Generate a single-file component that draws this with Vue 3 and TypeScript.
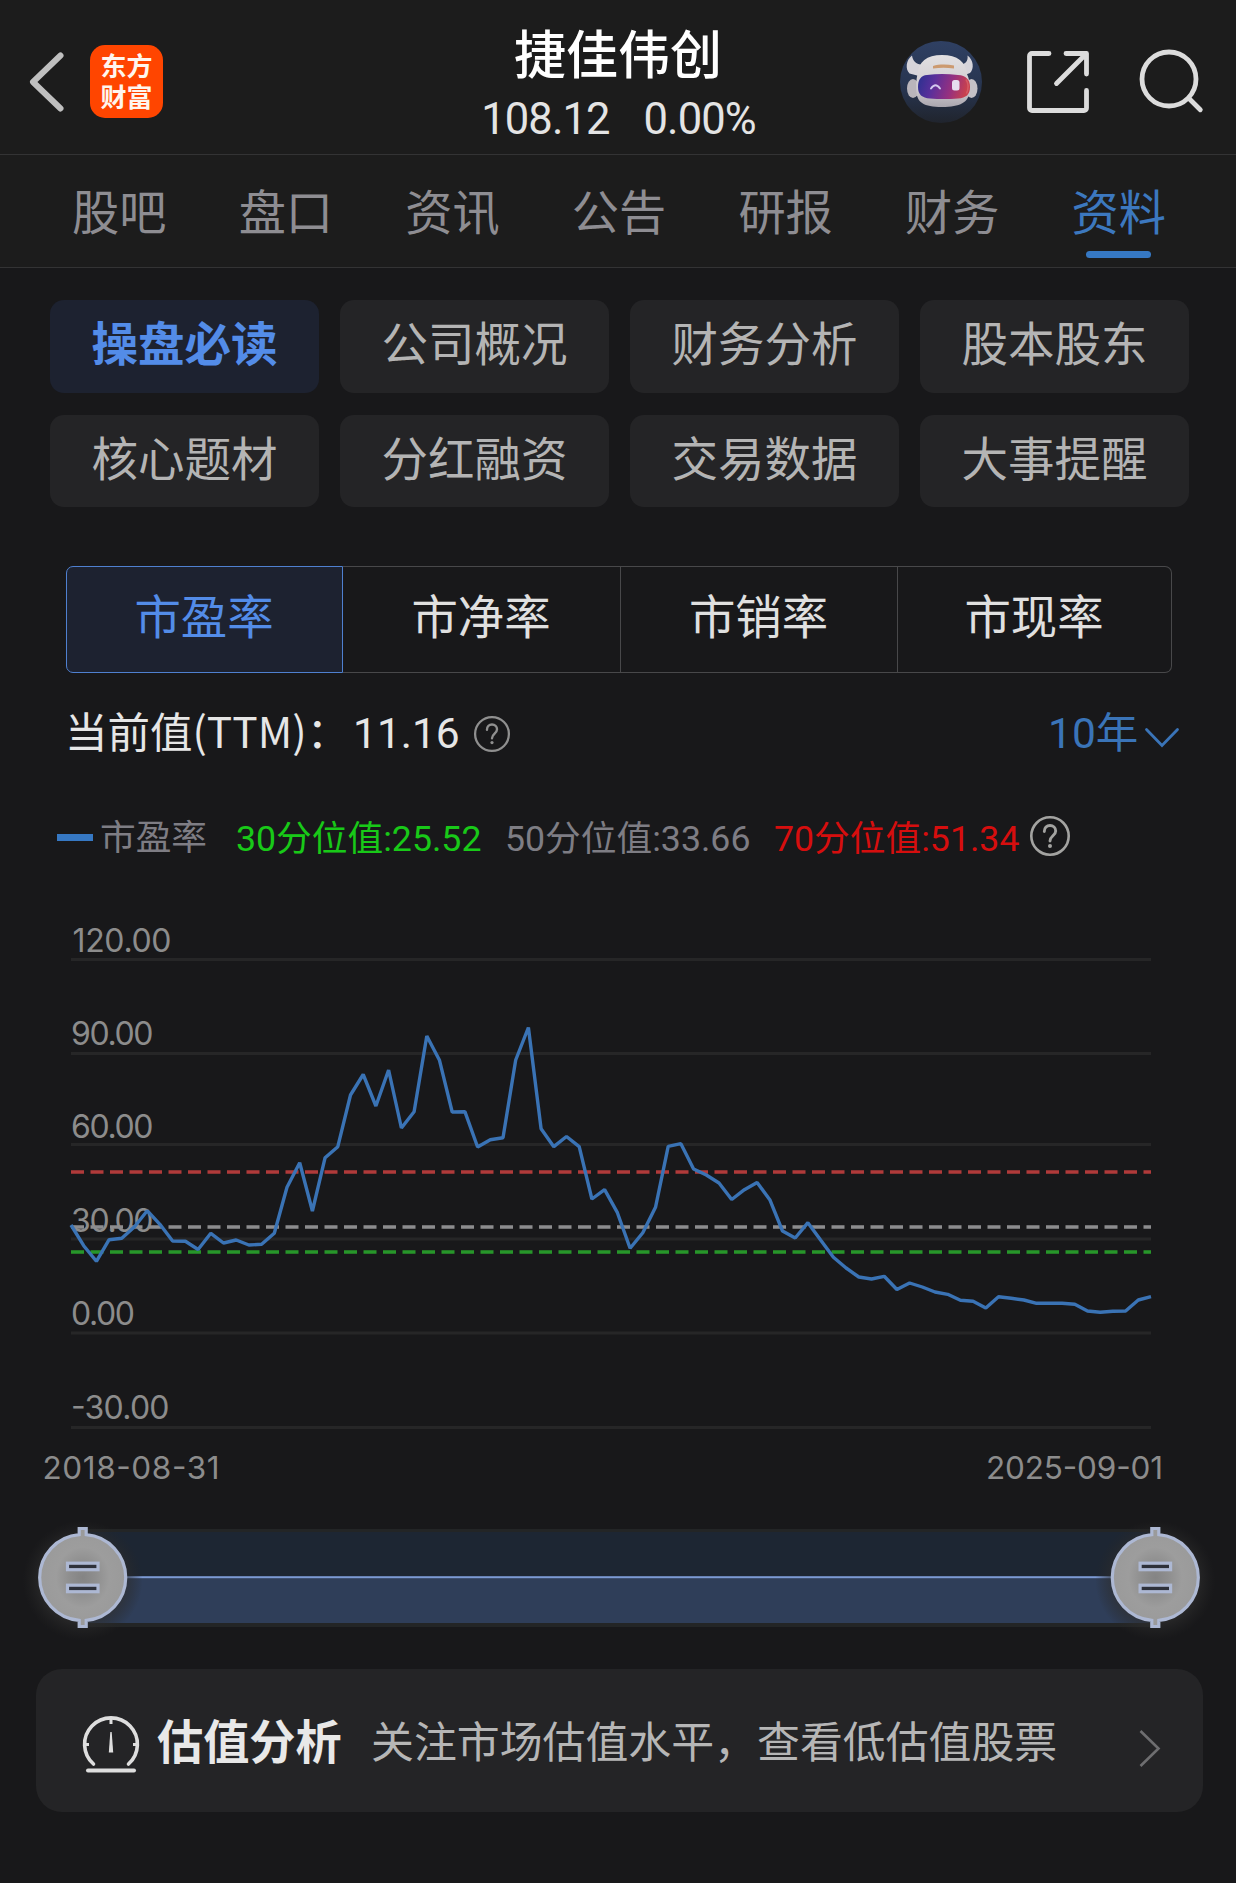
<script setup lang="ts">
const tabs: string[] = ['股吧', '盘口', '资讯', '公告', '研报', '财务', '资料']
const activeTab = '资料'

const sections: string[] = [
  '操盘必读', '公司概况', '财务分析', '股本股东',
  '核心题材', '分红融资', '交易数据', '大事提醒',
]
const activeSection = '操盘必读'

const metrics: string[] = ['市盈率', '市净率', '市销率', '市现率']
const activeMetric = '市盈率'

interface AxisRow {
  label: string
  line: number
  base: number
  x: number
  width: number
}

const axis: AxisRow[] = [
  { label: '120.00', line: 59.5, base: 52, x: 72.5, width: 99 },
  { label: '90.00', line: 153.5, base: 145, x: 71, width: 82.5 },
  { label: '60.00', line: 244.5, base: 238.3, x: 71, width: 82.5 },
  { label: '30.00', line: 339, base: 332, x: 71, width: 82.5 },
  { label: '0.00', line: 433, base: 425, x: 71, width: 64 },
  { label: '-30.00', line: 527.5, base: 519, x: 71, width: 98.5 },
]

const percentiles = [
  { y: 272, color: '#b03a3a' },
  { y: 327, color: '#8c8c8e' },
  { y: 352, color: '#27962a' },
]

// Heights of the monthly samples inside the plot, left to right
const samples: number[] = [
  325, 345.7, 361.3, 339.7, 338.3, 326.7, 310.7, 324.3, 341, 341.3, 349.5, 333.3, 343, 340, 345, 344.3,
  333.3, 287.3, 262.7, 311, 257.7, 246.7, 195, 174.5, 206, 170, 228, 211.7, 136, 160.3, 212, 211.7,
  247, 239.7, 237.7, 160, 127.5, 228.7, 246.7, 236.5, 246.7, 299, 289.7, 312.7, 348.3, 332.7, 307.3,
  246.3, 243.7, 269, 275, 283, 299.5, 289.7, 282.5, 299.7, 331, 338, 322.7, 340, 357.3, 368, 377, 379,
  376.3, 389.5, 383, 387, 392, 394.3, 400.3, 401.3, 408, 396.7, 398.3, 400, 403.3, 403.3, 403.3,
  404.3, 411, 412.3, 411.3, 411, 400, 396.7,
]
const left = 71
const right = 1151
const line = samples
  .map((y, i) => `${(left + ((right - left) * i) / (samples.length - 1)).toFixed(1)},${y}`)
  .join(' ')

const handles: number[] = [82.7, 1155.3]
</script>

<template>
  <div class="page">
    <header class="header">
      <div class="side">
        <svg class="back" width="40" height="64" viewBox="0 0 40 64">
          <path d="M34.500 5.500 7 32l27.500 26.500" fill="none" stroke="#bfbfbf" stroke-width="6" stroke-linecap="round" stroke-linejoin="round" />
        </svg>
        <div class="logo">东方财富</div>
      </div>
      <div class="heading">
        <div class="name">捷佳伟创</div>
        <div class="quote"><span>108.12</span><span>0.00%</span></div>
      </div>
      <div class="side actions">
        <svg width="82" height="82" viewBox="0 0 82 82">
          <defs>
            <linearGradient id="sky" x1="0" y1="0" x2="0" y2="1">
              <stop offset="0" stop-color="#2f4063" />
              <stop offset="0.6" stop-color="#27344e" />
              <stop offset="1" stop-color="#20242d" />
            </linearGradient>
            <linearGradient id="visor" x1="0" y1="0" x2="1" y2="0.15">
              <stop offset="0" stop-color="#29318f" />
              <stop offset="0.35" stop-color="#5b2f9b" />
              <stop offset="0.7" stop-color="#96307f" />
              <stop offset="1" stop-color="#c8414e" />
            </linearGradient>
            <linearGradient id="shell" x1="0" y1="0" x2="0" y2="1">
              <stop offset="0" stop-color="#e2e0e2" />
              <stop offset="0.65" stop-color="#cfcbd0" />
              <stop offset="1" stop-color="#aaa6ae" />
            </linearGradient>
          </defs>
          <circle cx="41" cy="41" r="41" fill="url(#sky)" />
          <path d="M12 14.500C6 19 5 28 9.500 32.500L19 35l5-12c-6 2-11-2-12-8.500zM67.500 14.500c6 4.500 7 13 2.500 17.500L62 35l-4-12c6 1.500 10.500-2 9.500-8.500z" fill="#d6d4da" />
          <ellipse cx="13" cy="47.500" rx="6" ry="9.500" fill="#b9b5bb" />
          <ellipse cx="71.500" cy="47.500" rx="6" ry="9.500" fill="#c4c1c7" />
          <path d="M17.500 33c1-12 9-19 24.500-19s24 7 25 19c2.500 5 3 12 2.500 18-1 10-9 15-27.500 15s-25-5-25.500-15c-.3-6-.5-12 1-18z" fill="url(#shell)" />
          <path d="M33 25c6-1.800 14-1.800 21-.4v2.800c-7-1-14-1-21 0z" fill="#cc9a70" />
          <path d="M27 34q15-2 31 0c8 .5 12 4.500 12 12s-4 11-12 11.500q-14 1-28 0c-8-.5-12-4-12-11.500s3-11.500 9-12z" fill="url(#visor)" />
          <path d="M31 47.500q4.500-6.500 9 0" fill="none" stroke="#d4c8ee" stroke-width="1.900" stroke-linecap="round" />
          <rect x="52" y="39" width="7.500" height="10.500" rx="2.500" fill="#e6deee" />
          <path d="M66 38.500q4 6 .5 14" stroke="#d55b64" stroke-width="1.500" fill="none" />
        </svg>
        <svg class="share" width="64" height="64" viewBox="0 0 64 64" fill="none" stroke="#dcdcdc" stroke-width="4.800" stroke-linecap="round" stroke-linejoin="round">
          <path d="M23 3.500H6a2.500 2.500 0 0 0-2.500 2.500v52A2.500 2.500 0 0 0 6 60.500h52a2.500 2.500 0 0 0 2.500-2.500V40.500" />
          <path d="M40 3.500h20.500V24M60 4 30.500 33.500" />
        </svg>
        <svg class="search" width="66" height="66" viewBox="0 0 66 66" fill="none" stroke="#dcdcdc" stroke-width="4.800" stroke-linecap="round">
          <circle cx="30" cy="30" r="27" />
          <path d="M50 49.500 61.300 60.800" />
        </svg>
      </div>
    </header>

    <nav class="tabs">
      <div v-for="t in tabs" :key="t" class="tab" :class="{ active: t === activeTab }">{{ t }}</div>
    </nav>

    <div class="sections">
      <div v-for="s in sections" :key="s" class="section" :class="{ active: s === activeSection }">{{ s }}</div>
    </div>

    <div class="metrics">
      <div v-for="m in metrics" :key="m" class="metric" :class="{ active: m === activeMetric }">{{ m }}</div>
    </div>

    <div class="current">
      <span class="current-label">当前值(TTM)：</span>
      <span class="current-value">11.16</span>
      <svg class="help" width="38" height="38" viewBox="0 0 40 40" fill="none" stroke="#8f8f8f">
        <circle cx="20" cy="20" r="17.800" stroke-width="2.400" />
        <path d="M14.700 15.500c0-3.500 2.300-5.500 5.300-5.500s5.300 2 5.300 5c0 4.500-5.300 4.700-5.300 9.500" stroke-width="2.500" stroke-linecap="round" />
        <circle cx="20" cy="29" r="1.700" fill="#8f8f8f" stroke="none" />
      </svg>
      <div class="range">
        <span>10年</span>
        <svg width="36" height="22" viewBox="0 0 36 22">
          <path d="M2.500 2.500 18 18.500l15.500-16" fill="none" stroke="#3a74b8" stroke-width="2.800" stroke-linecap="round" />
        </svg>
      </div>
    </div>

    <div class="legend">
      <i class="swatch"></i>
      <span class="series">市盈率</span>
      <span class="pct low">30分位值:25.52</span>
      <span class="pct mid">50分位值:33.66</span>
      <span class="pct high">70分位值:51.34</span>
      <svg width="42" height="42" viewBox="0 0 42 42" fill="none" stroke="#a3a3a1">
        <circle cx="21" cy="21" r="18.700" stroke-width="2.600" />
        <path d="M15.300 16.500c0-3.800 2.500-6 5.700-6s5.700 2.200 5.700 5.400c0 4.800-5.700 5-5.700 10.100" stroke-width="2.900" stroke-linecap="round" />
        <circle cx="21" cy="31" r="2" fill="#a3a3a1" stroke="none" />
      </svg>
    </div>

    <svg class="chart" width="1236" height="600" viewBox="0 0 1236 600">
      <line v-for="a in axis" :key="a.label" :x1="left" :x2="right" :y1="a.line" :y2="a.line" stroke="#262627" stroke-width="3" />
      <text v-for="a in axis" :key="a.label" class="tick" :x="a.x" :y="a.base" :textLength="a.width">{{ a.label }}</text>
      <line v-for="p in percentiles" :key="p.y" :x1="left" :x2="right" :y1="p.y" :y2="p.y" :stroke="p.color" stroke-width="3.600" stroke-dasharray="13 6.500" />
      <polyline :points="line" fill="none" stroke="#3a73b5" stroke-width="3.400" stroke-linejoin="bevel" />
      <text class="date" x="42.500" y="578.800" textLength="177">2018-08-31</text>
      <text class="date" x="986" y="578.800" textLength="177">2025-09-01</text>
    </svg>

    <svg class="slider" width="1236" height="140" viewBox="0 0 1236 140">
      <defs>
        <radialGradient id="knob">
          <stop offset="0" stop-color="#848484" />
          <stop offset="0.300" stop-color="#8e8e8e" />
          <stop offset="0.620" stop-color="#9d9d9d" />
          <stop offset="1" stop-color="#9a9a9a" />
        </radialGradient>
        <radialGradient id="glow">
          <stop offset="0.620" stop-color="#303030" stop-opacity="0.850" />
          <stop offset="1" stop-color="#262626" stop-opacity="0" />
        </radialGradient>
      </defs>
      <rect x="83" y="29" width="1072" height="98" fill="#232526" />
      <rect x="83" y="32" width="1072" height="45.500" fill="#1d2633" />
      <rect x="83" y="77" width="1072" height="46" fill="#2f3e59" />
      <rect x="83" y="76.200" width="1072" height="2" fill="#7c9ad4" />
      <g v-for="cx in handles" :key="cx" :transform="`translate(${cx} 77.500)`">
        <circle r="60" cy="3" fill="url(#glow)" />
        <path d="M-3.500-42.860V-49h7V-42.860A43 43 0 0 1 3.500 42.860V49h-7V42.860A43 43 0 0 1-3.500-42.860z" fill="url(#knob)" stroke="#adb8d3" stroke-width="3.200" />
        <rect x="-15.200" y="-14.300" width="30.500" height="6.500" fill="#2e313a" stroke="#adb8d3" stroke-width="3.200" />
        <rect x="-15.200" y="7.700" width="30.500" height="6.500" fill="#2e313a" stroke="#adb8d3" stroke-width="3.200" />
      </g>
    </svg>

    <div class="card">
      <svg class="gauge" width="60" height="60" viewBox="0 0 60 60" fill="none" stroke="#dedede">
        <path d="M12.500 49a26.400 26.400 0 1 1 35 0" stroke-width="3.600" stroke-linecap="round" />
        <path d="M30 4v5M4 29.500h4M52 29.500h4" stroke-width="3" />
        <path d="M29.300 17h1.400l1.500 20.500h-4.400z" fill="#dedede" stroke="none" />
        <path d="M7 55.500h46" stroke-width="4" stroke-linecap="round" />
      </svg>
      <span class="card-title">估值分析</span>
      <span class="card-desc">关注市场估值水平，查看低估值股票</span>
      <svg class="arrow" width="24" height="40" viewBox="0 0 24 40">
        <path d="M2.500 3 20.500 20.500 2.500 38" fill="none" stroke="#6e6e70" stroke-width="2.600" />
      </svg>
    </div>
  </div>
</template>

<style>
body {
  margin: 0;
  background: #18181a;
}
</style>

<style scoped>
.page {
  width: 1236px;
  height: 1883px;
  overflow: hidden;
  background: #18181a;
  font-family: "Noto Sans CJK SC", sans-serif;
  white-space: nowrap;
}
.page svg {
  display: block;
  flex: none;
}
.header {
  box-sizing: border-box;
  height: 155px;
  display: flex;
  justify-content: space-between;
  background: #1c1c1c;
  border-bottom: 1px solid #333334;
}
.side {
  display: flex;
  width: 420px;
}
.back {
  margin: 50px 0 0 26px;
}
.logo {
  box-sizing: border-box;
  width: 73px;
  height: 73px;
  margin: 45px 0 0 24px;
  padding: 4px 10px 0;
  border-radius: 15px;
  background: #ff4500;
  color: #fff6ee;
  font-size: 26px;
  font-weight: 700;
  line-height: 31px;
  text-align: center;
  white-space: normal;
}
.heading {
  display: flex;
  flex-direction: column;
  align-items: center;
  padding-top: 22px;
}
.name {
  color: #fff;
  font-size: 52px;
  line-height: 60px;
  font-weight: 500;
}
.quote {
  display: flex;
  gap: 34px;
  margin: 13px 0 0 1px;
  color: #e4e4e4;
  font-family: Roboto, "Noto Sans CJK SC", sans-serif;
  font-size: 43.500px;
  letter-spacing: -0.900px;
  line-height: 50px;
}
.actions {
  box-sizing: border-box;
  padding: 41px 0 0 84px;
}
.share {
  margin: 9px 0 0 44px;
}
.search {
  margin: 8px 0 0 49px;
}
.tabs {
  box-sizing: border-box;
  height: 113px;
  display: flex;
  padding: 0 34px 0 36px;
  background: #1c1c1c;
  border-bottom: 1px solid #333334;
}
.tab {
  flex: 1;
  display: flex;
  flex-direction: column;
  align-items: center;
  padding-top: 25px;
  color: #8e8d92;
  font-size: 47.200px;
  line-height: 60px;
}
.tab.active {
  color: #3c78bf;
}
.tab.active::after {
  content: "";
  width: 65px;
  height: 7px;
  margin-top: 11px;
  border-radius: 4px;
  background: #3678c3;
}
.sections {
  display: grid;
  grid-template-columns: repeat(4, 269px);
  grid-template-rows: 93px 92px;
  gap: 22px 21px;
  padding: 32px 0 0 50px;
}
.section {
  display: flex;
  align-items: center;
  justify-content: center;
  box-sizing: border-box;
  padding: 0 0 12px;
  border-radius: 14px;
  background: #242426;
  color: #b4b4b4;
  font-size: 46.500px;
}
.section.active {
  background: #1d2230;
  color: #538ce8;
  font-weight: 700;
}
.metrics {
  display: grid;
  grid-template-columns: 277px 278px 277px 274px;
  margin: 59px 64px 0 66px;
  height: 107px;
}
.metric {
  box-sizing: border-box;
  display: flex;
  align-items: center;
  justify-content: center;
  padding: 0 1px 13px 0;
  border: 1.500px solid #48484a;
  border-left: 0;
  color: #e0e0e0;
  font-size: 46.400px;
}
.metric:first-child {
  border-radius: 7px 0 0 7px;
}
.metric:last-child {
  border-radius: 0 7px 7px 0;
}
.metric.active {
  border: 1.500px solid #4f80d0;
  background: #1d2230;
  color: #538ce8;
}
.current {
  display: flex;
  align-items: center;
  height: 60px;
  margin: 26px 0 0 65px;
  color: #e6e6e6;
  font-size: 42.500px;
  line-height: 60px;
}
.current-label {
  width: 288px;
  padding-top: 2px;
}
.current-value {
  width: 120px;
  padding-top: 10px;
  font-family: Roboto, "Noto Sans CJK SC", sans-serif;
}
.help {
  margin-top: 10px;
}
.range {
  display: flex;
  align-items: center;
  margin-left: 537px;
  color: #3a74b8;
  font-family: Roboto, "Noto Sans CJK SC", sans-serif;
}
.range span {
  width: 96px;
  padding-top: 9px;
}
.range svg {
  margin-top: 18px;
}
.legend {
  display: flex;
  align-items: center;
  height: 50px;
  margin: 52px 0 0 57px;
  font-size: 35.700px;
  line-height: 50px;
}
.swatch {
  width: 36px;
  height: 7px;
  margin: 3px 7px 0 0;
  background: #3678c3;
}
.series {
  width: 136px;
  padding-bottom: 3px;
  color: #7e7d84;
}
.pct {
  width: 269px;
  padding-top: 6px;
  font-family: Roboto, "Noto Sans CJK SC", sans-serif;
}
.low {
  color: #18c918;
}
.mid {
  color: #7e7d84;
}
.high {
  width: 256px;
  color: #d60e0e;
}
.legend svg {
  margin-left: -1px;
}
.chart {
  margin-top: 39px;
}
.tick {
  fill: #8c8c8c;
  font-family: Inter, sans-serif;
  font-size: 32px;
}
.date {
  fill: #8c8c8c;
  font-family: Inter, sans-serif;
  font-size: 31.500px;
}
.card {
  display: flex;
  align-items: center;
  box-sizing: border-box;
  width: 1167px;
  height: 143px;
  margin: 29px 0 0 36px;
  padding-left: 45px;
  border-radius: 26px;
  background: #242426;
}
.gauge {
  margin-top: 9px;
}
.card-title {
  width: 214px;
  margin: -4px 0 0 16px;
  color: #e8e8e8;
  font-size: 46.200px;
  font-weight: 700;
}
.card-desc {
  width: 767px;
  margin-top: -3px;
  color: #b6b6b6;
  font-size: 42.900px;
}
.arrow {
  margin-top: 14px;
}
</style>
